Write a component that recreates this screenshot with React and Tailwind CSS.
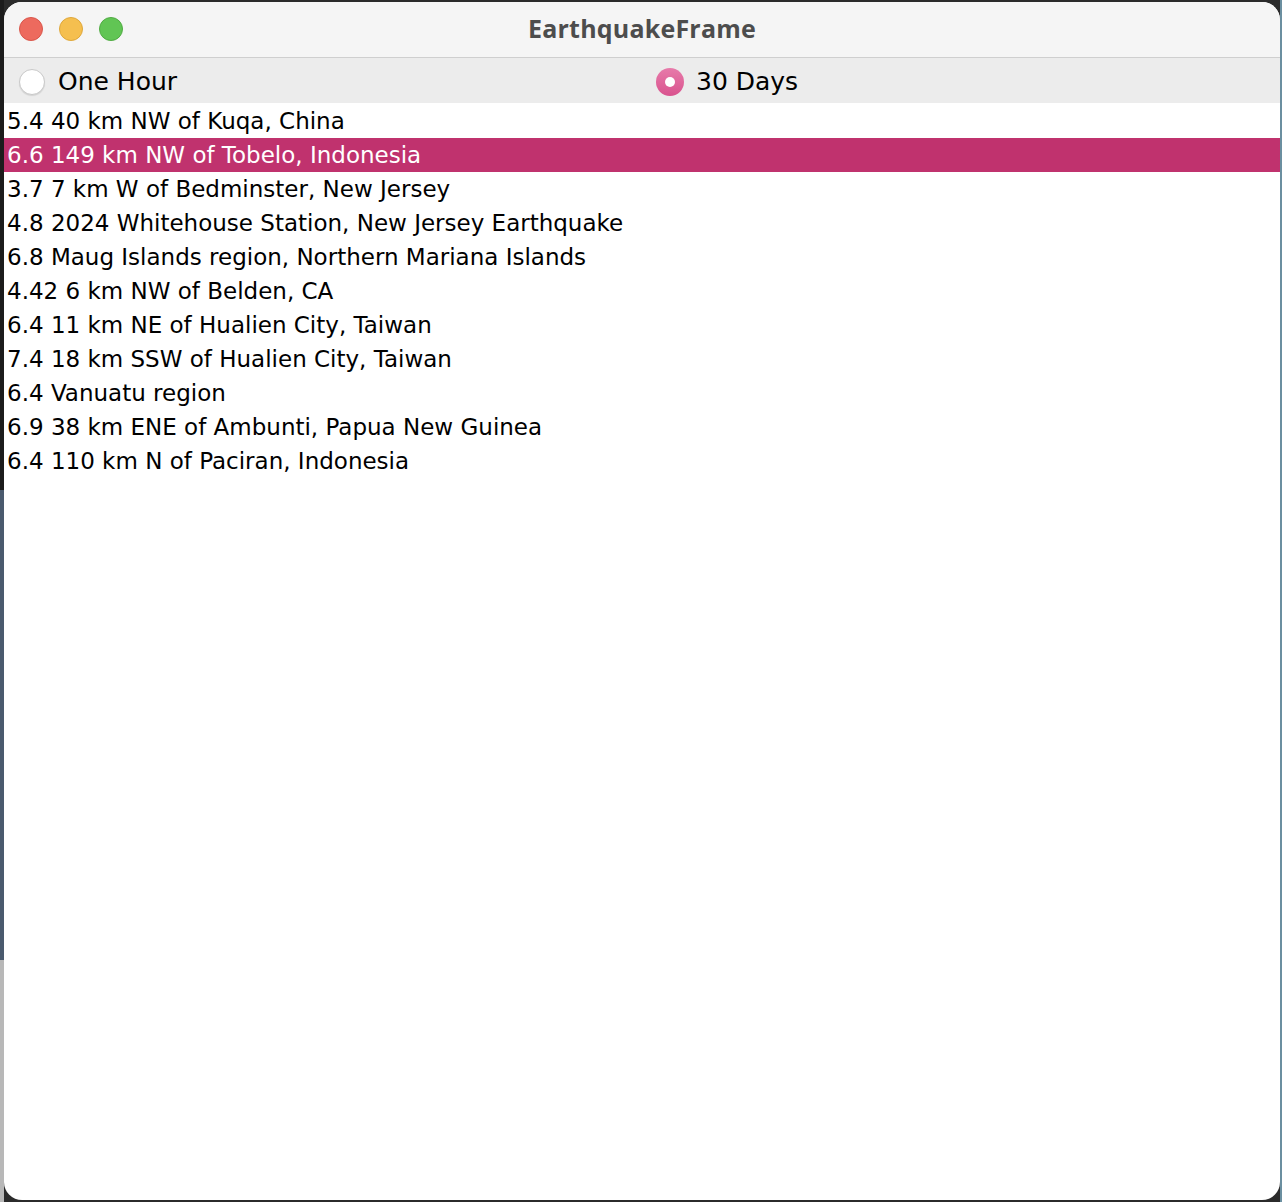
export default function App() {
  const rows = [
    "5.4 40 km NW of Kuqa, China",
    "6.6 149 km NW of Tobelo, Indonesia",
    "3.7 7 km W of Bedminster, New Jersey",
    "4.8 2024 Whitehouse Station, New Jersey Earthquake",
    "6.8 Maug Islands region, Northern Mariana Islands",
    "4.42 6 km NW of Belden, CA",
    "6.4 11 km NE of Hualien City, Taiwan",
    "7.4 18 km SSW of Hualien City, Taiwan",
    "6.4 Vanuatu region",
    "6.9 38 km ENE of Ambunti, Papua New Guinea",
    "6.4 110 km N of Paciran, Indonesia",
  ];
  return (
    <div className="w-[1282px] h-[1202px] bg-[#2b2b2b] flex overflow-hidden" style={{ fontFamily: '"DejaVu Sans", sans-serif' }}>
      <div className="w-[4px] shrink-0 flex flex-col">
        <div className="h-[490px] bg-[#1c1c1c]"></div>
        <div className="h-[470px] bg-[#4a5a6e]"></div>
        <div className="flex-1 bg-[#b8b8b8]"></div>
      </div>
      <div className="w-[1276px] mt-[2px] h-[1198px] bg-white rounded-[18px] overflow-hidden flex flex-col">
        <div className="h-[56px] bg-[#f5f5f5] border-b border-[#cfcfcf] relative flex items-center justify-center shrink-0">
          <div className="absolute left-[15px] top-[15px] flex gap-[16px]">
            <div className="w-[24px] h-[24px] rounded-full bg-[#ed6a5e] border border-[#d9574c]"></div>
            <div className="w-[24px] h-[24px] rounded-full bg-[#f5bf4f] border border-[#dea73c]"></div>
            <div className="w-[24px] h-[24px] rounded-full bg-[#61c554] border border-[#51ab44]"></div>
          </div>
          <span className="text-[25px] font-bold text-[#4d4d4d] -mt-[2px] tracking-[0.2px]" style={{ fontFamily: '"Open Sans", sans-serif' }}>EarthquakeFrame</span>
        </div>
        <div className="h-[45px] bg-[#ececec] flex items-center shrink-0 pt-[3px]">
          <div className="w-[638px] flex items-center pl-[15px] gap-[13px]">
            <div className="w-[26px] h-[26px] rounded-full bg-white border border-[#c9c9c9] shadow-[0_1px_1px_rgba(0,0,0,0.1)]"></div>
            <span className="text-[25px] text-black -mt-[1px]">One Hour</span>
          </div>
          <div className="flex items-center pl-[14px] gap-[12px]">
            <div className="w-[28px] h-[28px] rounded-full bg-gradient-to-b from-[#e77aaa] to-[#d9528e] flex items-center justify-center">
              <div className="w-[10px] h-[10px] rounded-full bg-white"></div>
            </div>
            <span className="text-[25px] text-black -mt-[1px]">30 Days</span>
          </div>
        </div>
        <div className="flex flex-col pt-px">
          {rows.map((r, i) => (
            <div
              key={i}
              className={
                i === 1
                  ? "h-[34px] flex items-center pl-[3px] pt-[1px] bg-[#c0326e] text-white text-[23px] whitespace-nowrap"
                  : "h-[34px] flex items-center pl-[3px] pt-[1px] text-black text-[23px] whitespace-nowrap"
              }
            >
              {r}
            </div>
          ))}
        </div>
      </div>
      <div className="w-[2px] shrink-0 bg-[#6b8fa0]"></div>
    </div>
  );
}
